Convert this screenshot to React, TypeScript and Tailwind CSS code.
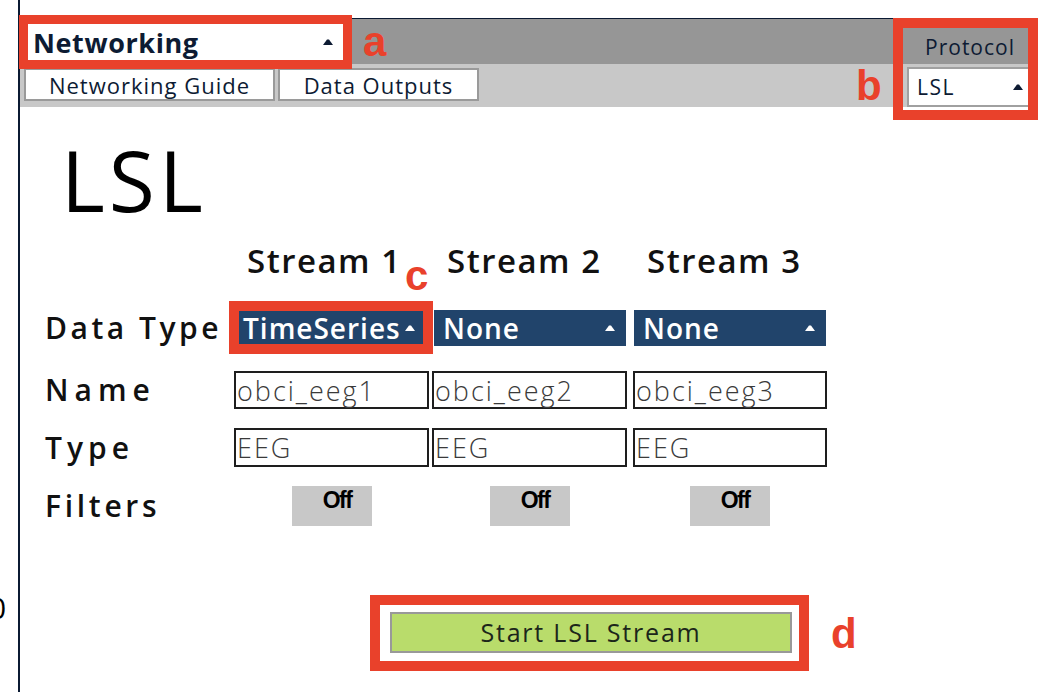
type CaretProps = { className?: string };

// small up-pointing triangle used by every dropdown
function Caret({ className }: CaretProps) {
  return (
    <svg width="10" height="6" viewBox="0 0 10 6" className={className}>
      <path d="M0 6 L4 0.5 L6 0.5 L10 6 Z" fill="currentColor" />
    </svg>
  );
}

function Tab({ label, w, ml }: { label: string; w: string; ml: string }) {
  return (
    <div
      className={`${w} ${ml} mt-[4px] flex h-[33px] items-center justify-center border-2 border-[#9a9a9a] bg-white text-[22px] leading-none tracking-[1px] text-[#0d1b33]`}
    >
      {label}
    </div>
  );
}

function BlueSelect({ value }: { value: string }) {
  return (
    <div className="flex h-[36px] w-[192px] shrink-0 items-center justify-between bg-[#21446b] pl-[9px] pr-[11px] text-white">
      <span className="min-w-0 whitespace-nowrap text-[28px] font-semibold leading-none tracking-[1px]">{value}</span>
      <Caret className="shrink-0 text-white" />
    </div>
  );
}

function TextBox({ value, w, h }: { value: string; w: string; h: string }) {
  return (
    <div
      className={`${w} ${h} flex shrink-0 items-center border-2 border-[#1e1e1e] bg-white pl-[1px] text-[27px] font-light leading-none tracking-[2px] text-[#3a3a3a]`}
    >
      {value}
    </div>
  );
}

function RowLabel({ text, track }: { text: string; track: string }) {
  return (
    <div className={`w-[189px] shrink-0 text-[30px] font-semibold leading-none ${track} text-[#111]`}>
      {text}
    </div>
  );
}

const streams = [
  { head: "Stream 1", type: "TimeSeries", name: "obci_eeg1" },
  { head: "Stream 2", type: "None", name: "obci_eeg2" },
  { head: "Stream 3", type: "None", name: "obci_eeg3" },
];

export default function App() {
  return (
    <div className="relative h-[692px] w-[1038px] overflow-hidden bg-white font-['Open_Sans',sans-serif]">
      <div className="flex h-full">
        {/* cut-off glyph on the far left */}
        <div className="w-[18px] shrink-0 overflow-hidden pt-[593px]">
          <span className="-ml-[11px] block text-[30px] leading-none text-black">0</span>
        </div>
        <div className="w-[2px] shrink-0 bg-[#0b1a33]" />

        <div className="flex min-w-0 flex-1 flex-col pt-[18px]">
          <div className="h-[1px] bg-[#0b1a33]" />

          {/* header */}
          <div className="flex h-[45px] items-start justify-between bg-[#969696]">
            <div className="ml-[4px] mt-[4px] flex h-[38px] w-[320px] items-center justify-between bg-white pl-[9px] pr-[11px]">
              <span className="text-[27px] font-bold leading-none tracking-[0.6px] text-[#0d1b33]">Networking</span>
              <Caret className="text-[#0d1b33]" />
            </div>
            <span className="mr-[23px] mt-[16px] text-[21px] leading-[24px] tracking-[1px] text-[#0d1b33]">Protocol</span>
          </div>

          {/* tabs */}
          <div className="flex h-[43px] items-start bg-[#c8c8c8]">
            <Tab label="Networking Guide" w="w-[251px]" ml="ml-[4px]" />
            <Tab label="Data Outputs" w="w-[201px]" ml="ml-[3px]" />
            <div className="ml-auto mr-[4px] mt-[3px] flex h-[40px] w-[127px] items-center justify-between border-2 border-[#a0a0a0] bg-white pl-[8px] pr-[9px] text-[#0d1b33]">
              <span className="text-[21px] leading-none tracking-[1.5px]">LSL</span>
              <Caret />
            </div>
          </div>

          {/* body */}
          <div className="flex flex-1 flex-col pl-[25px]">
            <h1 className="ml-[16px] mt-[31px] text-[84px] leading-none tracking-[4px] text-black">LSL</h1>

            <div className="ml-[189px] mt-[22px] flex">
              {streams.map((s) => (
                <div key={s.head} className="w-[200px] pl-[13px] text-[33px] font-semibold leading-none tracking-[1.5px] text-[#111]">
                  {s.head}
                </div>
              ))}
            </div>

            <div className="mt-[33px] flex items-center">
              <RowLabel text="Data Type" track="tracking-[3.5px]" />
              <div className="flex gap-[8px]">
                {streams.map((s) => (
                  <BlueSelect key={s.head} value={s.type} />
                ))}
              </div>
            </div>

            <div className="mt-[25px] flex items-center">
              <RowLabel text="Name" track="tracking-[6px]" />
              <TextBox value={streams[0].name} w="w-[195px]" h="h-[38px]" />
              <div className="ml-[3px]">
                <TextBox value={streams[1].name} w="w-[195px]" h="h-[38px]" />
              </div>
              <div className="ml-[6px]">
                <TextBox value={streams[2].name} w="w-[194px]" h="h-[38px]" />
              </div>
            </div>

            <div className="mt-[19px] flex items-center">
              <RowLabel text="Type" track="tracking-[5px]" />
              <TextBox value="EEG" w="w-[195px]" h="h-[39px]" />
              <div className="ml-[3px]">
                <TextBox value="EEG" w="w-[195px]" h="h-[39px]" />
              </div>
              <div className="ml-[6px]">
                <TextBox value="EEG" w="w-[194px]" h="h-[39px]" />
              </div>
            </div>

            <div className="mt-[19px] flex items-center">
              <RowLabel text="Filters" track="tracking-[3.7px]" />
              {streams.map((s, i) => (
                <div key={s.head} className="w-[200px]">
                  <div
                    className={`${i === 0 ? "ml-[58px]" : "ml-[56px]"} flex h-[40px] w-[80px] justify-center bg-[#c8c8c8] pl-[10px] pt-[3px] font-['Liberation_Sans',sans-serif] text-[23px] font-bold leading-none tracking-[-1.5px] text-black`}
                  >
                    Off
                  </div>
                </div>
              ))}
            </div>

            <div className="ml-[345px] mt-[86px] flex h-[41px] w-[402px] items-center justify-center border-2 border-[#999] bg-[#b9dc6b] text-[25px] leading-none tracking-[1.8px] text-[#1c261a]">
              Start LSL Stream
            </div>
          </div>
        </div>
      </div>

      {/* annotation overlays */}
      <div className="absolute left-[19px] top-[15px] h-[54px] w-[333px] border-[9px] border-[#e9412b]" />
      <div className="absolute left-[893px] top-[18px] h-[102px] w-[145px] border-[10px] border-[#e9412b]" />
      <div className="absolute left-[229px] top-[301px] h-[53px] w-[204px] border-[10px] border-[#e9412b]" />
      <div className="absolute left-[370px] top-[595px] h-[76px] w-[439px] border-[10px] border-[#e9412b]" />

      <span className="absolute left-[363px] top-[21px] font-['Liberation_Sans',sans-serif] text-[42px] font-bold leading-none text-[#e9412b]">a</span>
      <span className="absolute left-[856px] top-[65px] font-['Liberation_Sans',sans-serif] text-[42px] font-bold leading-none text-[#e9412b]">b</span>
      <span className="absolute left-[405px] top-[255px] font-['Liberation_Sans',sans-serif] text-[42px] font-bold leading-none text-[#e9412b]">c</span>
      <span className="absolute left-[831px] top-[613px] font-['Liberation_Sans',sans-serif] text-[42px] font-bold leading-none text-[#e9412b]">d</span>
    </div>
  );
}
